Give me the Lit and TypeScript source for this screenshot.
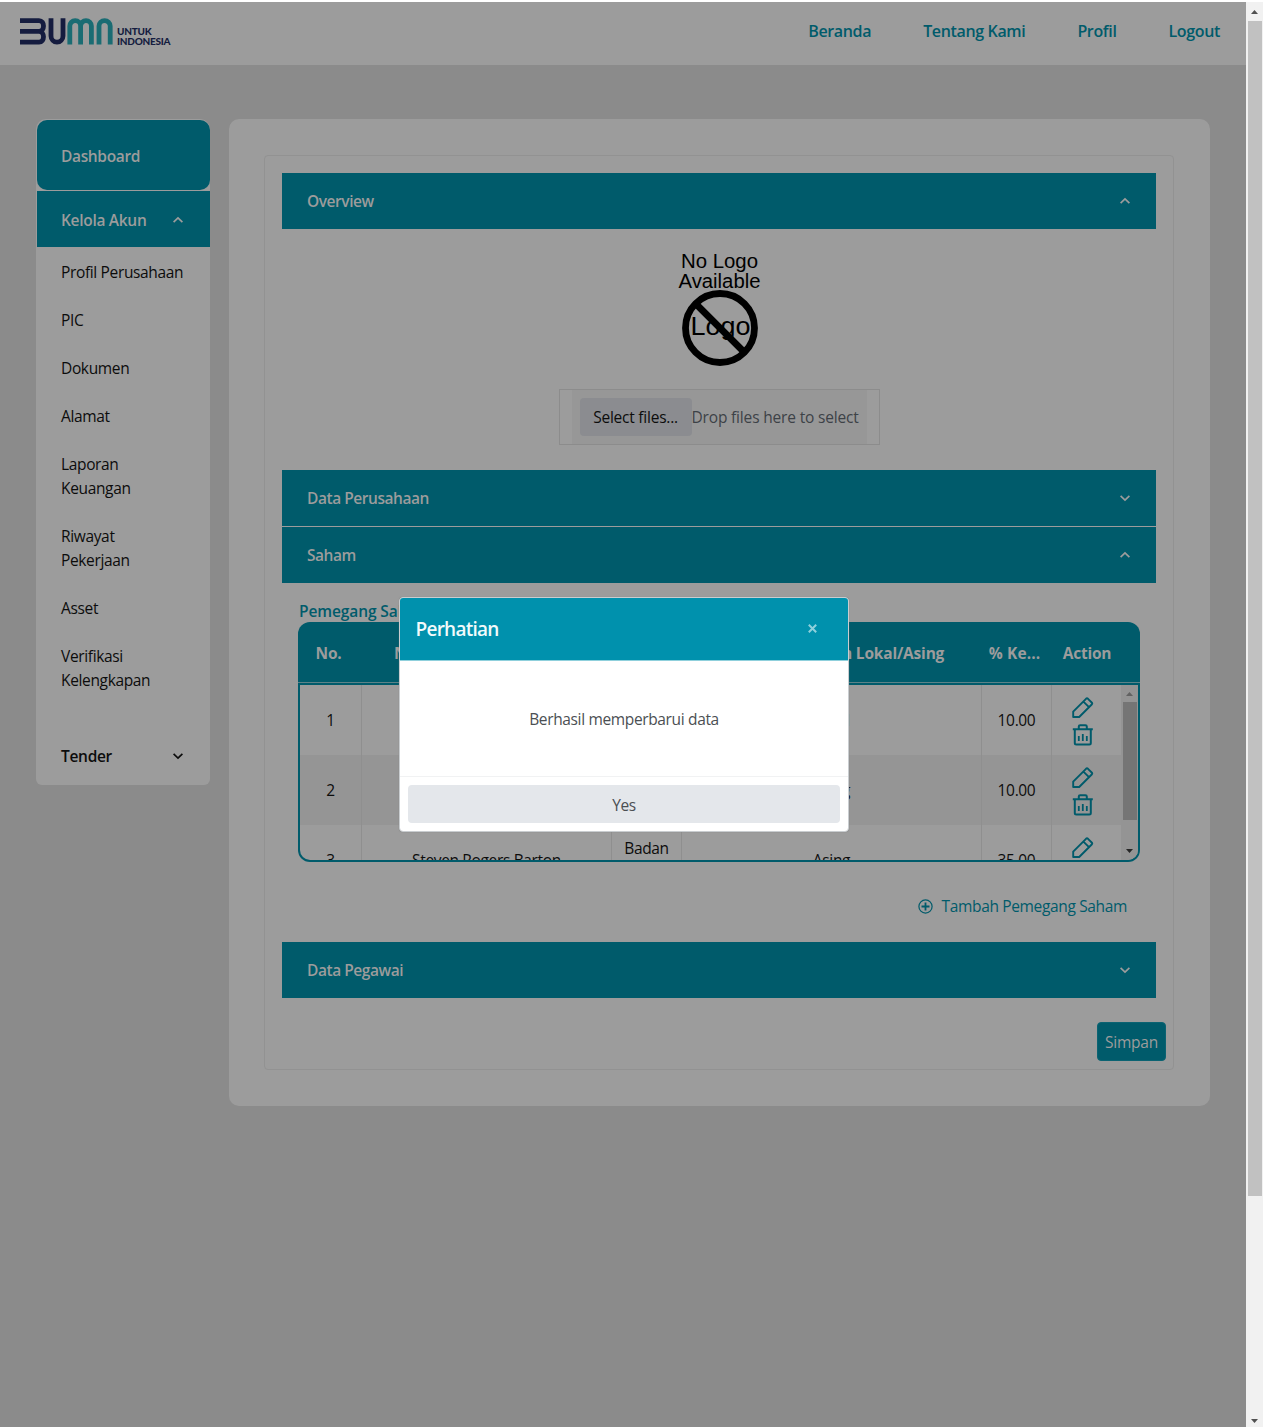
import { LitElement, html, css } from "lit";
import { customElement } from "lit/decorators.js";

const chevron = (up: boolean) => html`<svg class="chev" width="12" height="8" viewBox="0 0 12 8">
  <path d=${up ? "M1.6 6.2 L6 2 L10.4 6.2" : "M1.6 1.8 L6 6 L10.4 1.8"} fill="none" stroke="currentColor" stroke-width="1.7" />
</svg>`;

const pencil = html`<svg width="22" height="22" viewBox="0 0 22 22" fill="none" stroke="#005b6b" stroke-width="1.9" stroke-linejoin="round">
  <path d="M1.2 20 V14.6 L14 1.8 Q15 0.9 16 1.8 L19.7 5.5 Q20.7 6.5 19.7 7.5 L7.2 20 Z M11.4 4.6 L17 10.2" />
</svg>`;

const trash = html`<svg width="22" height="22" viewBox="0 0 22 22" fill="none" stroke="#005b6b" stroke-width="2" stroke-linejoin="round">
  <path d="M0.8 5.2 H20.8 M2.8 5.2 V19 Q2.8 20.5 4.3 20.5 H17.3 Q18.8 20.5 18.8 19 V5.2 M6.8 5.2 V2.6 Q6.8 1.2 8.2 1.2 H13.4 Q14.8 1.2 14.8 2.6 V5.2" />
  <path d="M6.8 12 V17 M10.8 10 V17 M14.8 12 V17" stroke-width="1.8" />
</svg>`;

const arrow = (up: boolean, color: string) => html`<svg width="7" height="4" viewBox="0 0 7 4">
  <path d=${up ? "M0 4 L3.5 0 L7 4 Z" : "M0 0 L3.5 4 L7 0 Z"} fill=${color} />
</svg>`;

@customElement("app-root")
export class AppRoot extends LitElement {
  static styles = css`
    :host {
      display: block;
      position: relative;
      width: 1263px;
      height: 1427px;
      overflow: hidden;
      background: #fff;
      font: 400 15.5px/24px "Open Sans", "Noto Sans", sans-serif;
      letter-spacing: -0.35px;
      color: #0c0c0c;
    }
    * { box-sizing: border-box; }
    svg { display: block; }
    .window { display: flex; height: 1427px; padding-top: 2px; }
    .page { width: 1246px; background: #8b8b8b; }
    .scroll { width: 17px; background: #f1f1f1; display: flex; flex-direction: column; align-items: center; padding: 8px 0 4px; }
    .scroll .thumb { width: 14px; height: 1175px; margin: 7px 0 auto; background: #c1c1c1; }

    .top { height: 63px; background: #9c9c9c; display: flex; justify-content: space-between; padding: 0 26px 0 20px; }
    .brand { margin-top: 16px; display: flex; gap: 4px; color: #151c3f; }
    .brand .tag { font: 900 10px/9.5px Lato, sans-serif; padding-top: 9px; letter-spacing: -0.25px; white-space: nowrap; }
    nav { display: flex; gap: 52px; padding-top: 17px; font-size: 16px; font-weight: 600; color: #005b6b; letter-spacing: -0.35px; }

    .cols { display: flex; align-items: flex-start; gap: 19px; padding: 54px 36px 0 36px; }
    .side { width: 174px; height: 666px; background: #9c9c9c; border-radius: 10px 10px 6px 6px; padding: 1px 0.5px; display: flex; flex-direction: column; }
    .dash { height: 70px; border-radius: 10px; background: #005b6b; color: #9c9c9c; font-weight: 600; padding: 24px 24.5px; }
    .group { display: flex; justify-content: space-between; align-items: center; height: 56px; padding: 2px 26px 0 24.5px; margin-top: 1px; font-weight: 600; letter-spacing: -0.3px; }
    .group.open { background: #005b6b; color: #9c9c9c; }
    .menu { padding-top: 1px; margin-bottom: 22px; }
    .menu div { padding: 12px 24.5px; }

    .card { width: 981px; height: 987px; background: #9c9c9c; border-radius: 10px; padding: 36px 36px 0 35px; }
    .frame { height: 915px; border: 1px solid #929292; border-radius: 4px; padding: 17px 17px 0; }
    .bar { height: 56px; background: #005b6b; color: #9c9c9c; font-weight: 600; letter-spacing: -0.45px; display: flex; align-items: center; justify-content: space-between; padding: 0 25.5px 0 25px; }
    .bar + .bar { margin-top: 1px; }
    .overview { height: 241px; display: flex; flex-direction: column; align-items: center; padding-top: 19px; }
    .upload { width: 321px; height: 56px; border: 1px solid #8c8c8c; margin-top: 21px; padding: 0 12px; }
    .drop { height: 54px; background: #979797; display: flex; align-items: center; padding-left: 8px; color: #3d4247; white-space: nowrap; letter-spacing: -0.17px; }
    .pick { width: 112px; height: 38px; border-radius: 4px; background: #8b8c90; color: #0c0c0c; display: flex; justify-content: center; align-items: center; letter-spacing: -0.23px; }

    .saham { height: 359px; padding: 16px 16px 0; }
    .label { color: #005b6b; font-weight: 600; height: 23px; padding-left: 1px; letter-spacing: -0.1px; }
    .grid { height: 240px; width: 842px; border-radius: 12px; overflow: hidden; background: #005b6b; }
    .row { display: grid; grid-template-columns: 62px 250px 70px 300px 70px 69px; }
    .hrow { height: 61px; padding-top: 2px; padding-left: 1px; color: #9c9c9c; font-weight: 700; align-items: center; text-align: center; white-space: nowrap; border-bottom: 1px solid #5d8288; letter-spacing: -0.2px; }
    .hrow span:first-child { padding-right: 3px; }
    .hrow span:nth-child(5) { padding-right: 3px; letter-spacing: 0.1px; }
    .hrow span:last-child { padding-left: 3px; }
    .body { margin: 2px 2px 0; height: 175px; background: #9c9c9c; display: flex; overflow: hidden; border-radius: 0 0 10px 10px; }
    .rows { width: 821px; }
    .drow { height: 70px; }
    .drow.alt { background: #959595; }
    .cell { display: flex; align-items: center; justify-content: center; text-align: center; border-right: 1px solid #8f8f8f; }
    .cell.act { border: 0; flex-direction: column; gap: 5px; padding: 2px 7px 0 0; }
    .inner { width: 17px; background: #949494; display: flex; flex-direction: column; align-items: center; padding: 7px 0; }
    .inner .thumb { width: 14px; height: 118px; background: #757575; margin: 6px 0 auto; }
    .add { display: flex; align-items: center; justify-content: flex-end; gap: 9px; padding: 32px 13px 0 0; color: #005b6b; }
    .foot { display: flex; justify-content: flex-end; padding-top: 24px; margin-right: -10px; }
    .save { width: 69px; height: 39px; border-radius: 4px; background: #005b6b; border: 1px solid #0b6372; color: #9c9c9c; display: flex; align-items: center; justify-content: center; letter-spacing: -0.2px; }

    .modal { position: absolute; left: 399px; top: 597px; width: 450px; height: 235px; background: #fff; border: 1px solid #c9cdd0; border-radius: 4px; overflow: hidden; color: #4b4f53; display: flex; flex-direction: column; box-shadow: 0 0 1px #777; }
    .mhead { height: 63px; background: #0091ad; border-bottom: 1px solid #8fd0dc; color: #f2fafb; display: flex; align-items: center; justify-content: space-between; padding: 0 31px 1px 15.5px; font-size: 19px; font-weight: 600; letter-spacing: -0.75px; }
    .mbody { flex: 1; display: flex; align-items: center; justify-content: center; border-bottom: 1px solid #f1f2f3; }
    .mfoot { height: 54px; padding: 8px; }
    .yes { height: 38px; border-radius: 4px; background: #e4e7eb; display: flex; align-items: center; justify-content: center; padding-top: 1px; }
  `;

  private nav = ["Beranda", "Tentang Kami", "Profil", "Logout"];
  private menu = ["Profil Perusahaan", "PIC", "Dokumen", "Alamat", "Laporan Keuangan", "Riwayat Pekerjaan", "Asset", "Verifikasi Kelengkapan"];
  private heads = ["No.", "Nama Pemegang Saham", "Badan", "Pemegang Saham Lokal/Asing", "% Ke...", "Action"];
  private holders = [
    ["1", "", "", "Lokal", "10.00"],
    ["2", "", "", "Asing", "10.00"],
    ["3", "Steven Rogers Barton", "Badan Hukum", "Asing", "35.00"],
  ];

  private bar(title: string, open: boolean) {
    return html`<div class="bar"><span>${title}</span>${chevron(open)}</div>`;
  }

  private brand() {
    return html`<div class="brand">
      <svg width="93" height="27" viewBox="0 0 93 27" fill="none" stroke-width="4.8">
        <g stroke="#151c3f">
          <path d="M0 2.6 H19 C25 2.6 25 13.4 19 13.4 H0 M19 13.4 C25 13.4 25 24.2 19 24.2 H0" />
          <path d="M31 0.2 V18 A6 6.2 0 0 0 43 18 V0.2" />
        </g>
        <g stroke="#1a6c73">
          <path d="M49.8 26.6 V8 A5.4 5.4 0 0 1 60.6 8 V26.6 M60.6 8 A5.4 5.4 0 0 1 71.4 8 V26.6" />
          <path d="M79 26.6 V8 A5.6 5.4 0 0 1 90.2 8 V26.6" />
        </g>
      </svg>
      <div class="tag">UNTUK<br />INDONESIA</div>
    </div>`;
  }

  private noLogo() {
    return html`<svg width="100" height="120" viewBox="0 0 100 120" font-family="Liberation Sans, Arial, sans-serif" text-anchor="middle" letter-spacing="0">
      <text x="50.5" y="20" font-size="20" textLength="77" lengthAdjust="spacingAndGlyphs">No Logo</text>
      <text x="50.5" y="40" font-size="20" textLength="82" lengthAdjust="spacingAndGlyphs">Available</text>
      <text x="51.5" y="87" font-size="25" textLength="60" lengthAdjust="spacingAndGlyphs">Logo</text>
      <circle cx="51" cy="80" r="34.5" fill="none" stroke="#000" stroke-width="6.8" />
      <path d="M27 56 L75 104" stroke="#000" stroke-width="6.8" />
    </svg>`;
  }

  render() {
    return html`
      <div class="window">
        <div class="page">
          <header class="top">
            ${this.brand()}
            <nav>${this.nav.map((n) => html`<span>${n}</span>`)}</nav>
          </header>
          <div class="cols">
            <aside class="side">
              <div class="dash">Dashboard</div>
              <div class="group open"><span>Kelola Akun</span>${chevron(true)}</div>
              <div class="menu">${this.menu.map((m) => html`<div>${m}</div>`)}</div>
              <div class="group"><span>Tender</span>${chevron(false)}</div>
            </aside>
            <main class="card">
              <div class="frame">
                ${this.bar("Overview", true)}
                <section class="overview">
                  ${this.noLogo()}
                  <div class="upload">
                    <div class="drop"><div class="pick">Select files...</div>Drop files here to select</div>
                  </div>
                </section>
                ${this.bar("Data Perusahaan", false)} ${this.bar("Saham", true)}
                <section class="saham">
                  <div class="label">Pemegang Saham</div>
                  <div class="grid">
                    <div class="row hrow">${this.heads.map((h) => html`<span>${h}</span>`)}</div>
                    <div class="body">
                      <div class="rows">
                        ${this.holders.map(
                          (r, i) => html`<div class="row drow ${i === 1 ? "alt" : ""}">
                            ${r.map((c) => html`<div class="cell">${c}</div>`)}
                            <div class="cell act">${pencil}${trash}</div>
                          </div>`
                        )}
                      </div>
                      <div class="inner">${arrow(true, "#626262")}<div class="thumb"></div>${arrow(false, "#262626")}</div>
                    </div>
                  </div>
                  <div class="add">
                    <svg width="15" height="15" viewBox="0 0 15 15" fill="none" stroke="#005b6b">
                      <circle cx="7.5" cy="7.5" r="6.6" stroke-width="1.2" />
                      <path d="M7.5 3.5 V11.5 M3.5 7.5 H11.5" stroke-width="1.8" />
                    </svg>
                    <span>Tambah Pemegang Saham</span>
                  </div>
                </section>
                ${this.bar("Data Pegawai", false)}
                <div class="foot"><div class="save">Simpan</div></div>
              </div>
            </main>
          </div>
        </div>
        <div class="scroll">${arrow(true, "#505050")}<div class="thumb"></div>${arrow(false, "#505050")}</div>
      </div>
      <div class="modal" role="dialog">
        <div class="mhead">
          <span>Perhatian</span>
          <svg width="9" height="9" viewBox="0 0 9 9"><path d="M0.8 0.8 L8.2 8.2 M8.2 0.8 L0.8 8.2" stroke="#8fd0dc" stroke-width="2" /></svg>
        </div>
        <div class="mbody">Berhasil memperbarui data</div>
        <div class="mfoot"><div class="yes">Yes</div></div>
      </div>
    `;
  }
}
